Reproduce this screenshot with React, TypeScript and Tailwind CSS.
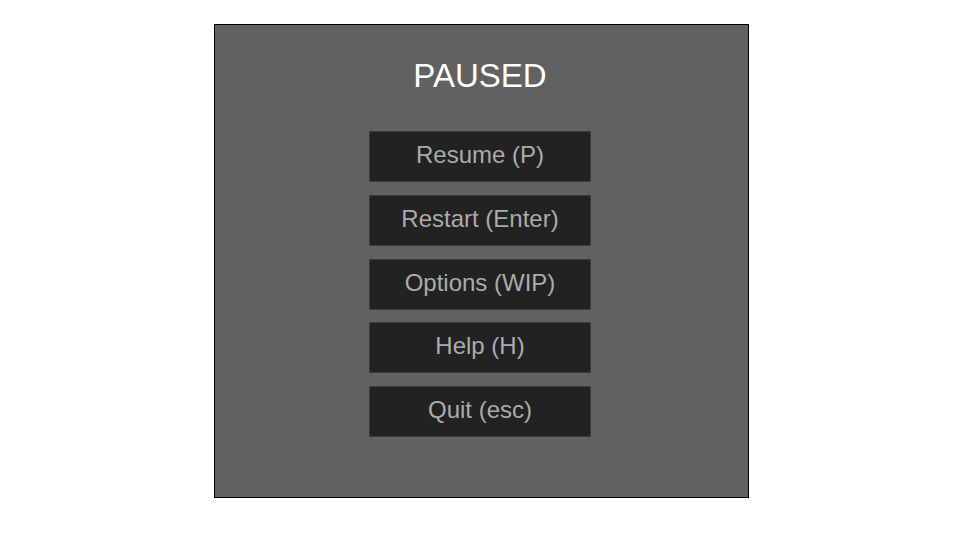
import React from 'react';

const items = [
    { label: 'Resume (P)', gap: 'mt-0' },
    { label: 'Restart (Enter)', gap: 'mt-[13px]' },
    { label: 'Options (WIP)', gap: 'mt-[13px]' },
    { label: 'Help (H)', gap: 'mt-[12px]' },
    { label: 'Quit (esc)', gap: 'mt-[13px]' },
];

export default function App() {
    return (
        <div className="w-[960px] h-[540px] bg-white pt-[24px] pl-[214px]" style={{ fontFamily: '"Liberation Sans", Arial, sans-serif' }}>
            <div className="w-[535px] h-[474px] border border-black bg-[#616161] flex flex-col items-center pr-[3px] pt-[32px]">
                <h1 className="text-[33px] leading-[38px] text-white">PAUSED</h1>
                <div className="mt-[36px] flex flex-col">
                    {items.map((item) => (
                        <button
                            key={item.label}
                            className={`${item.gap} w-[222px] h-[51px] bg-[#222222] border border-[#3c3c3c] text-[#ababab] text-[24px] flex items-center justify-center pb-[3px]`}
                        >
                            {item.label}
                        </button>
                    ))}
                </div>
            </div>
        </div>
    );
}
